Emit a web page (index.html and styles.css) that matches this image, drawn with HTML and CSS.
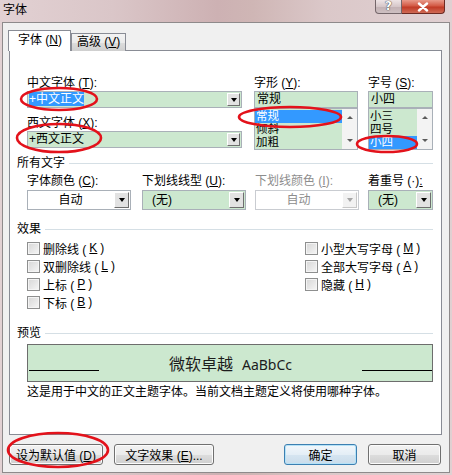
FILE: index.html
```html
<!DOCTYPE html>
<html lang="zh-CN">
<head>
    <meta charset="UTF-8">
    <title>字体</title>
    <link rel="stylesheet" href="styles.css">
</head>
<body>
<div class="window">
    <div class="titlebar">
        <span class="title">字体</span>
        <div class="caption-buttons">
            <span class="cap-help">?</span>
            <span class="cap-close">
                <svg width="14" height="10" viewBox="0 0 14 10"><path d="M3 1.5 L11 8.5 M11 1.5 L3 8.5" stroke="#fff" stroke-width="2.4" stroke-linecap="round"/></svg>
            </span>
        </div>
    </div>

    <div class="client">
        <div class="tabs">
            <div class="tab active">字体 (<u>N</u>)</div>
            <div class="tab">高级 (<u>V</u>)</div>
        </div>

        <div class="panel">
            <!-- font faces, style and size -->
            <div class="font-row">
                <div class="field">
                    <div class="label">中文字体 (<u>T</u>):</div>
                    <div class="combo small green wide"><span class="combo-text"><span class="sel-text">+中文正文</span></span><span class="drop"></span></div>
                    <div class="label second">西文字体 (<u>X</u>):</div>
                    <div class="combo small green wide"><span class="combo-text">+西文正文</span><span class="drop"></span></div>
                </div>
                <div class="field">
                    <div class="label">字形 (<u>Y</u>):</div>
                    <div class="textbox">常规</div>
                    <div class="listbox">
                        <div class="items">
                            <div class="item selected">常规</div>
                            <div class="item">倾斜</div>
                            <div class="item">加粗</div>
                        </div>
                        <div class="scrollbar"><span class="arrow up"></span><span class="arrow down"></span></div>
                    </div>
                </div>
                <div class="field">
                    <div class="label">字号 (<u>S</u>):</div>
                    <div class="textbox">小四</div>
                    <div class="listbox">
                        <div class="items">
                            <div class="item">小三</div>
                            <div class="item">四号</div>
                            <div class="item selected">小四</div>
                        </div>
                        <div class="scrollbar"><span class="arrow up"></span><span class="arrow down"></span></div>
                    </div>
                </div>
            </div>

            <div class="group-head first">所有文字</div>
            <div class="color-row">
                <div class="field">
                    <div class="label">字体颜色 (<u>C</u>):</div>
                    <div class="combo large"><span class="combo-text center">自动</span><span class="drop"></span></div>
                </div>
                <div class="field">
                    <div class="label">下划线线型 (<u>U</u>):</div>
                    <div class="combo large green"><span class="combo-text">(无)</span><span class="drop"></span></div>
                </div>
                <div class="field">
                    <div class="label disabled">下划线颜色 (<u>I</u>):</div>
                    <div class="combo large disabled"><span class="combo-text center">自动</span><span class="drop"></span></div>
                </div>
                <div class="field">
                    <div class="label">着重号 (·)<u>:</u></div>
                    <div class="combo large green narrow"><span class="combo-text">(无)</span><span class="drop"></span></div>
                </div>
            </div>

            <div class="group-head">效果</div>
            <div class="effects">
                <label class="check"><span class="box"></span>删除线 (<u>K</u>)</label>
                <label class="check"><span class="box"></span>双删除线 (<u>L</u>)</label>
                <label class="check"><span class="box"></span>上标 (<u>P</u>)</label>
                <label class="check"><span class="box"></span>下标 (<u>B</u>)</label>
                <label class="check"><span class="box"></span>小型大写字母 (<u>M</u>)</label>
                <label class="check"><span class="box"></span>全部大写字母 (<u>A</u>)</label>
                <label class="check"><span class="box"></span>隐藏 (<u>H</u>)</label>
            </div>

            <div class="group-head preview-head">预览</div>
            <div class="preview">
                <span class="rule left"></span>
                <span class="sample"><span class="sample-cn">微软卓越</span><span class="sample-en">AaBbCc</span></span>
                <span class="rule right"></span>
            </div>
            <p class="desc">这是用于中文的正文主题字体。当前文档主题定义将使用哪种字体。</p>
        </div>

        <div class="buttons">
            <button class="btn w-default">设为默认值 (<u>D</u>)</button>
            <button class="btn w-effects">文字效果 (<u>E</u>)...</button>
            <span class="spacer"></span>
            <button class="btn primary">确定</button>
            <button class="btn">取消</button>
        </div>
    </div>

    <!-- red marks drawn over the screenshot -->
    <svg class="marks" width="452" height="475" viewBox="0 0 452 475">
        <g fill="none" stroke="#e3121b" stroke-width="2.6">
            <ellipse cx="59" cy="99" rx="38" ry="11"/>
            <ellipse cx="59" cy="138" rx="42" ry="14"/>
            <ellipse cx="290" cy="117" rx="51" ry="10"/>
            <ellipse cx="387" cy="144" rx="30" ry="8"/>
            <ellipse cx="58" cy="450" rx="50" ry="17"/>
        </g>
    </svg>
</div>
</body>
</html>
```

FILE: styles.css
```css
body {
    margin: 0;
    font-family: "Liberation Sans", "Noto Sans CJK SC", sans-serif;
    font-size: 12px;
    color: #000;
    background: #d8c5c7;
}
.window {
    position: relative;
    width: 452px;
    height: 475px;
    overflow: hidden;
    background: linear-gradient(90deg, #e2d1d3 0%, #dac6c8 25%, #cdb1b3 48%, #cfb6b5 56%, #dbc8c9 72%, #e0d0d2 100%);
}
.titlebar {
    height: 22px;
    display: flex;
    justify-content: space-between;
    align-items: flex-start;
}
.title {
    padding: 3px 0 0 3px;
    line-height: 14px;
}
.caption-buttons {
    display: flex;
    margin-right: 7px;
}
.cap-help {
    width: 27px;
    height: 14px;
    box-sizing: border-box;
    border: 1px solid #74666a;
    border-top: none;
    border-radius: 0 0 0 4px;
    background: linear-gradient(#eee4e5, #d6c7c9 50%, #c3b1b4 51%, #cdbfc1);
    color: #fff;
    font-family: "DejaVu Sans", sans-serif;
    font-weight: bold;
    font-size: 12px;
    line-height: 13px;
    text-align: center;
    text-shadow: 0 0 1px #333, 0 0 1px #333;
}
.cap-close {
    width: 43px;
    height: 14px;
    box-sizing: border-box;
    border: 1px solid #6d2a22;
    border-top: none;
    border-left: none;
    border-radius: 0 0 4px 0;
    background: linear-gradient(#e89a8a, #d35a45 45%, #c13b26 55%, #cf6a55);
    display: flex;
    align-items: center;
    justify-content: center;
}
.client {
    margin: 0 2px;
    border: 1px solid #8e8a8b;
    background: #f0f0f0;
    padding: 8px 7px 0 6px;
    height: 441px;
}
.tabs {
    display: flex;
    align-items: flex-end;
    height: 20px;
    position: relative;
    z-index: 1;
    margin-bottom: -1px;
}
.tab {
    box-sizing: border-box;
    height: 18px;
    width: 55px;
    padding-left: 5px;
    line-height: 16px;
    border: 1px solid #898c95;
    border-bottom: none;
    background: linear-gradient(#f3f3f3, #ebebeb 50%, #dddddd 51%, #cfcfcf);
    white-space: nowrap;
}
.tab.active {
    height: 21px;
    width: 63px;
    margin-left: -1px;
    padding-left: 9px;
    line-height: 19px;
    background: #fff;
}
.panel {
    box-sizing: border-box;
    height: 385px;
    border: 1px solid #898c95;
    background: #fff;
    padding: 24px 8px 0 17px;
}
.label {
    height: 16px;
    line-height: 16px;
    white-space: nowrap;
}
.label.second {
    margin-top: 7px;
}
.label.disabled {
    color: #8d8d8d;
}
.font-row {
    display: grid;
    grid-template-columns: 227px 114px 65px;
}
.combo {
    box-sizing: border-box;
    display: flex;
    border: 1px solid #a9b0b8;
    background: #fff;
}
.combo.green, .textbox, .listbox {
    background: #cce8cf;
}
.combo.small {
    height: 17px;
    width: 215px;
}
.combo-text {
    flex: 1;
    line-height: 15px;
    padding-left: 1px;
    white-space: nowrap;
}
.sel-text {
    background: #3399ff;
    color: #fff;
}
.drop {
    position: relative;
    box-sizing: border-box;
    width: 13px;
    margin: 1px;
    background: #e2e2e2;
    border: 1px solid;
    border-color: #fff #6e6e6e #6e6e6e #fff;
}
.drop::after {
    content: "";
    position: absolute;
    left: 50%;
    top: 50%;
    margin: -2px 0 0 -3px;
    border-left: 3px solid transparent;
    border-right: 3px solid transparent;
    border-top: 4px solid #000;
}
.textbox {
    box-sizing: border-box;
    height: 17px;
    width: 104px;
    border: 1px solid #a9b0b8;
    padding-left: 2px;
    line-height: 15px;
}
.listbox {
    box-sizing: border-box;
    height: 42px;
    width: 104px;
    border: 1px solid #a9b0b8;
    display: flex;
    overflow: hidden;
}
.font-row .field:last-child .textbox,
.font-row .field:last-child .listbox {
    width: 65px;
}
.items {
    flex: 1;
    padding-top: 1px;
}
.item {
    height: 13px;
    line-height: 13px;
    font-size: 11.5px;
    padding-left: 1px;
    overflow: hidden;
}
.item.selected {
    background: #3399ff;
    color: #fff;
}
.scrollbar {
    width: 15px;
    background: #f3f3f3;
    display: flex;
    flex-direction: column;
    justify-content: space-between;
}
.arrow {
    position: relative;
    height: 17px;
}
.arrow::after {
    content: "";
    position: absolute;
    left: 5px;
    top: 7px;
    border-left: 3px solid transparent;
    border-right: 3px solid transparent;
}
.arrow.up::after {
    border-bottom: 3px solid #5b5b5b;
}
.arrow.down::after {
    border-top: 3px solid #5b5b5b;
}
.group-head {
    display: flex;
    align-items: center;
    gap: 4px;
    margin-left: -10px;
    margin-top: 11px;
    height: 16px;
    line-height: 16px;
}
.group-head::after {
    content: "";
    flex: 1;
    height: 1px;
    background: #d5dfe5;
}
.group-head.first {
    margin-top: 5px;
}
.group-head.preview-head {
    margin-top: 14px;
}
.color-row {
    display: grid;
    grid-template-columns: 115px 113px 113px 65px;
    margin-top: 3px;
}
.color-row .label {
    height: 14px;
    line-height: 14px;
    margin-bottom: 2px;
}
.combo.large {
    height: 20px;
    width: 104px;
}
.combo.large .combo-text {
    line-height: 18px;
    padding-left: 9px;
}
.combo.large .combo-text.center {
    padding-left: 0;
    text-align: center;
}
.combo.large .drop {
    width: 15px;
}
.combo.disabled {
    border-color: #c9ccd1;
    color: #8d8d8d;
}
.combo.disabled .drop {
    background: #f2f2f2;
    border-color: #fff #c8c8c8 #c8c8c8 #fff;
}
.combo.disabled .drop::after {
    border-top-color: #a6a6a6;
}
.combo.narrow {
    width: 65px;
}
.effects {
    display: grid;
    grid-auto-flow: column;
    grid-template-rows: repeat(4, 18px);
    grid-template-columns: 278px 1fr;
    margin-top: 2px;
}
.check {
    display: flex;
    align-items: center;
    gap: 3px;
    white-space: nowrap;
}
.box {
    box-sizing: border-box;
    width: 13px;
    height: 13px;
    border: 1px solid #8e8f8f;
    background: linear-gradient(135deg, #d6d6d6, #f6f6f6);
    box-shadow: inset 0 0 0 1px #f4f4f4;
}
.preview {
    box-sizing: border-box;
    height: 38px;
    margin-top: 3px;
    border: 1px solid #6d6d6d;
    background: #cce8cf;
    display: flex;
    align-items: center;
}
.rule {
    width: 70px;
    height: 1px;
    background: #000;
    align-self: flex-end;
    margin-bottom: 10px;
}
.rule.left {
    margin-left: 1px;
}
.sample {
    flex: 1;
    text-align: center;
    white-space: nowrap;
}
.sample-cn {
    font-family: "Noto Sans CJK SC", sans-serif;
    font-size: 16px;
    color: #1c1c1c;
}
.sample-en {
    font-family: "Noto Sans", sans-serif;
    font-size: 14px;
    margin-left: 9px;
    color: #1c1c1c;
}
.desc {
    margin: 3px 0 0;
    line-height: 14px;
    white-space: nowrap;
}
.buttons {
    display: flex;
    height: 21px;
    margin-top: 9px;
    padding-right: 1px;
    gap: 11px;
}
.spacer {
    flex: 1;
}
.btn {
    box-sizing: border-box;
    height: 21px;
    width: 73px;
    padding: 0;
    font-family: inherit;
    font-size: 12px;
    color: #000;
    border: 1px solid #707070;
    border-radius: 3px;
    background: linear-gradient(#f2f2f2, #ebebeb 50%, #dddddd 51%, #cfcfcf);
    box-shadow: inset 0 0 0 1px #fcfcfc;
    white-space: nowrap;
}
.btn.w-default {
    width: 94px;
}
.btn.w-effects {
    width: 100px;
}
.btn.primary {
    border-color: #3c7fb1;
    background: linear-gradient(#f2f7fb, #e4eef6 50%, #d6e5f1 51%, #cadcea);
    box-shadow: inset 0 0 0 1px #b5e2f7;
}
.marks {
    position: absolute;
    left: 0;
    top: 0;
    pointer-events: none;
}
```
